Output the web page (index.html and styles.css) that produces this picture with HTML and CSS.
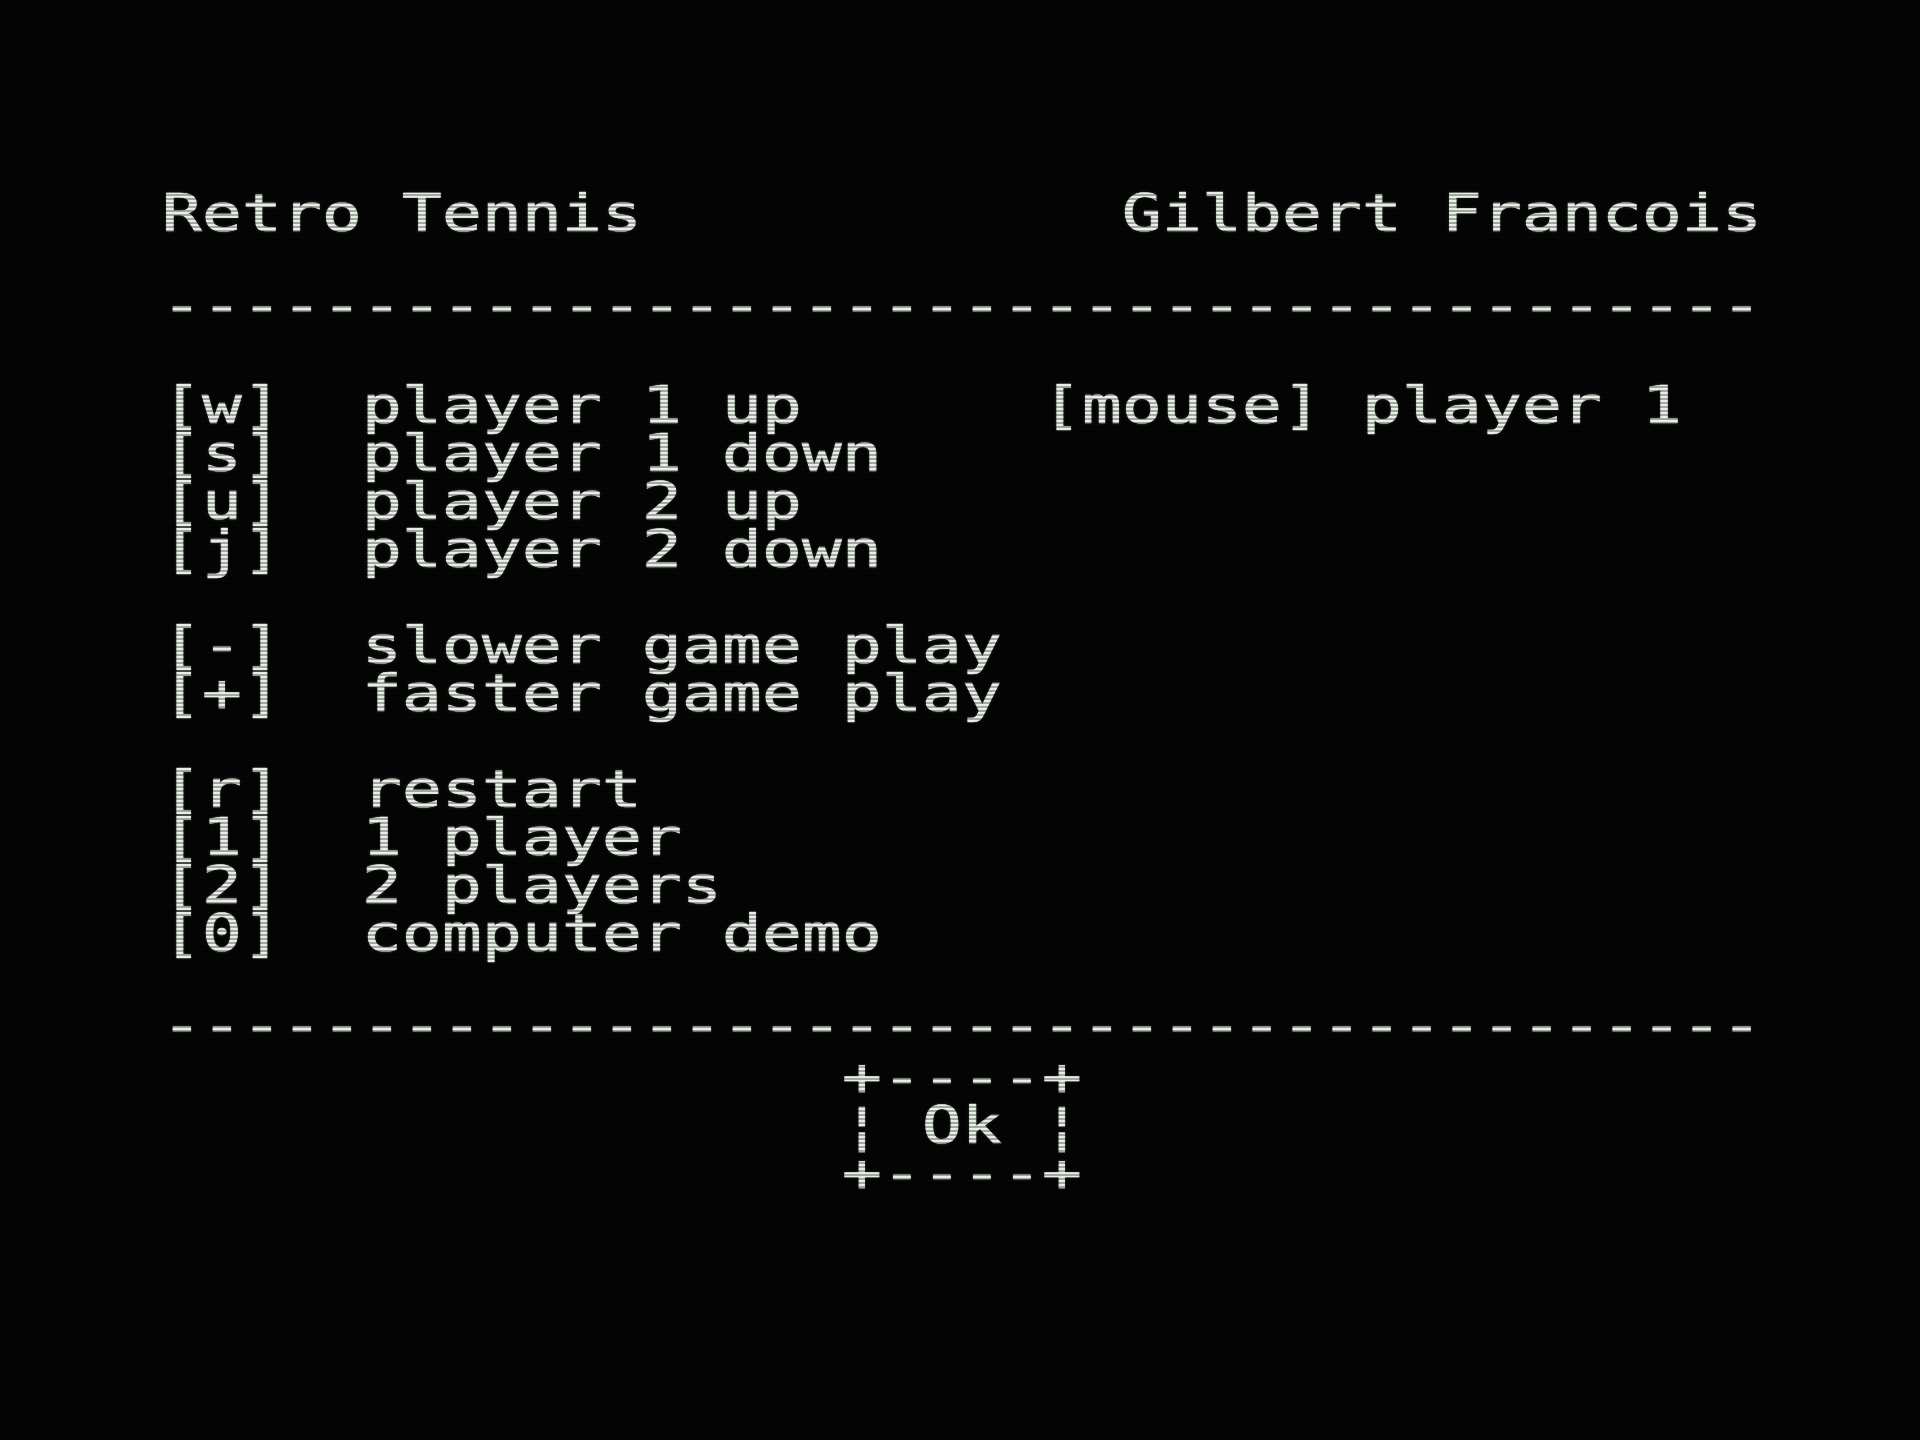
FILE: index.html
```html
<!DOCTYPE html>
<html lang="en">
<head>
<meta charset="utf-8">
<title>Retro Tennis</title>
<link rel="stylesheet" href="styles.css">
</head>
<body>
<main class="screen">
  <div class="grid">
    <header class="line title"><span>Retro Tennis</span><span>Gilbert Francois</span></header>
    <div class="line"></div>
    <div class="line rule">----------------------------------------</div>
    <div class="line"></div>

    <section class="group">
      <div class="line"><span class="key">[w]</span><span class="desc">player 1 up</span><span class="note">[mouse] player 1</span></div>
      <div class="line"><span class="key">[s]</span><span class="desc">player 1 down</span></div>
      <div class="line"><span class="key">[u]</span><span class="desc">player 2 up</span></div>
      <div class="line"><span class="key">[j]</span><span class="desc">player 2 down</span></div>
    </section>
    <div class="line"></div>

    <section class="group">
      <div class="line"><span class="key">[-]</span><span class="desc">slower game play</span></div>
      <div class="line"><span class="key">[+]</span><span class="desc">faster game play</span></div>
    </section>
    <div class="line"></div>

    <section class="group">
      <div class="line"><span class="key">[r]</span><span class="desc">restart</span></div>
      <div class="line"><span class="key">[1]</span><span class="desc">1 player</span></div>
      <div class="line"><span class="key">[2]</span><span class="desc">2 players</span></div>
      <div class="line"><span class="key">[0]</span><span class="desc">computer demo</span></div>
    </section>
    <div class="line"></div>

    <div class="line rule">----------------------------------------</div>

    <div class="button">
      <div class="line">+----+</div>
      <div class="line">¦ Ok ¦</div>
      <div class="line">+----+</div>
    </div>
  </div>
</main>
</body>
</html>
```

FILE: styles.css
```css
html, body {
  margin: 0;
  padding: 0;
  background: #040504;
}

.screen {
  position: relative;
  width: 1920px;
  height: 1440px;
  background: #040504;
  overflow: hidden;
}

.screen::after {
  content: "";
  position: absolute;
  inset: 0;
  pointer-events: none;
  background: repeating-linear-gradient(to bottom,
    rgba(0, 0, 0, 0) 0px,
    rgba(0, 0, 0, 0) 2px,
    rgba(0, 0, 0, 0.3) 2px,
    rgba(0, 0, 0, 0.3) 4px);
}

.grid {
  padding: 189px 0 0 162px;
  width: 1600px;
  font-family: "DejaVu Sans Mono", "Liberation Mono", monospace;
  font-size: 66px;
  letter-spacing: 0.26px;
  color: #e8efe6;
  -webkit-text-stroke: 0.9px #e8efe6;
  text-shadow: 0 0 3px rgba(220, 235, 220, 0.45);
}

.line {
  display: flex;
  height: 48px;
  line-height: 48px;
  white-space: pre;
  transform: translateY(1px) scaleY(0.78);
}

.rule {
  transform: translateY(-3px) scaleY(0.78);
  -webkit-text-stroke: 1.6px #e8efe6;
}

.group {
  display: flex;
  flex-direction: column;
}

.title {
  justify-content: space-between;
}

.key {
  width: 200px;
}

.desc {
  width: 680px;
}

.button {
  margin-left: 680px;
}
```
